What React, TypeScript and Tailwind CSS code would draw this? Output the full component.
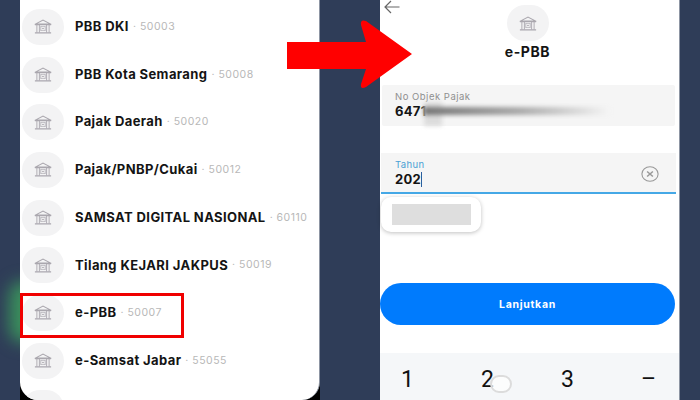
const banks = [
  { name: 'PBB DKI', code: '50003' },
  { name: 'PBB Kota Semarang', code: '50008' },
  { name: 'Pajak Daerah', code: '50020' },
  { name: 'Pajak/PNBP/Cukai', code: '50012' },
  { name: 'SAMSAT DIGITAL NASIONAL', code: '60110' },
  { name: 'Tilang KEJARI JAKPUS', code: '50019' },
  { name: 'e-PBB', code: '50007' },
  { name: 'e-Samsat Jabar', code: '55055' },
];

function BankIcon() {
  return (
    <span className="grid h-[36px] w-[42px] shrink-0 place-items-center rounded-full bg-[#f3f3f4]">
      <svg viewBox="0 0 20 20" preserveAspectRatio="none" className="h-[15px] w-[18px]" fill="none" stroke="#aaa7ae" strokeWidth="1.2">
        <path d="M2 6.5 L10 1.5 L18 6.5 Z" />
        <path d="M1 7.5 H19 M1 18.5 H19" strokeWidth="1.6" />
        <path d="M3.2 8 V18 M6 8 V18 M14 8 V18 M16.8 8 V18" strokeWidth="1.1" />
        <rect x="7.6" y="10" width="4.8" height="5.6" strokeWidth="0.8" />
        <circle cx="10" cy="12.8" r="1" fill="#aaa7ae" stroke="none" />
      </svg>
    </span>
  );
}

export default function App() {
  return (
    <div className="relative flex h-[400px] w-[700px] overflow-hidden bg-[#2f3d58] font-['Inter',sans-serif]">
      {/* green glow behind the left phone */}
      <div className="absolute left-[9px] top-[281px] h-[62px] w-[30px] rounded-full bg-[#3a8f5c] blur-[8px]" />

      {/* left phone */}
      <div className="relative ml-[20px] h-[400px] w-[300px] shrink-0 overflow-hidden bg-black">
        <div className="h-[400px] w-[300px] overflow-hidden rounded-b-[18px] border-r border-[#8d95a3] bg-white pt-[3px]">
          {banks.map((b) => (
            <div key={b.code} className="flex h-[47.7px] items-center pl-[2px]">
              <BankIcon />
              <span className="ml-[11px] text-[13px] font-bold tracking-[0.4px] whitespace-nowrap text-[#141414]">{b.name}</span>
              <span className="ml-[4px] text-[10.5px] tracking-[0.5px] whitespace-nowrap text-[#b8b8b8]">· {b.code}</span>
            </div>
          ))}
          <div className="flex h-[47.7px] items-center pl-[2px]">
            <BankIcon />
          </div>
        </div>
        {/* red highlight round e-PBB */}
        <div className="absolute left-0 top-[293px] h-[45px] w-[164px] border-[3px] border-[#f00000]" />
      </div>

      {/* right phone */}
      <div className="ml-[60px] flex h-[400px] w-[300px] shrink-0 flex-col border-r border-[#8d95a3] bg-white">
        <div className="relative flex flex-col items-center pt-[5px] pr-[4px]">
          <svg viewBox="0 0 16 14" className="absolute left-[4px] top-0 h-[14px] w-[16px]" fill="none" stroke="#666" strokeWidth="1.2">
            <path d="M15.5 7 H1 M7 1 L1 7 L7 13" />
          </svg>
          <BankIcon />
          <h1 className="mt-[1px] text-[14px] leading-[20px] font-bold tracking-[0.6px] text-[#141414]">e-PBB</h1>
        </div>

        <div className="relative mt-[23px] ml-[2px] h-[41px] w-[293px] rounded-[2px] bg-[#f5f5f5] px-[13px] pt-[6px]">
          <p className="text-[9.5px] leading-[12px] tracking-[0.5px] text-[#8f8f8f]">No Objek Pajak</p>
          <p className="text-[13px] leading-[17px] font-bold tracking-[0.3px] text-[#141414]">6471</p>
          <div className="absolute left-[42px] top-[17px] h-[24px] w-[18px] bg-[#dcdcdc] blur-[2px]" />
          <div className="absolute left-[42px] top-[22px] h-[8px] w-[186px] bg-gradient-to-r from-[#777777] via-[#a8a8a8] to-[#f5f5f5] blur-[2px]" />
        </div>

        <div className="relative mt-[27px] ml-[1px] h-[41px] w-[295px] border-b-2 border-[#45a8e6] bg-[#f5f5f5] px-[14px] pt-[6px]">
          <p className="text-[9.5px] leading-[12px] tracking-[0.4px] text-[#4a9fd4]">Tahun</p>
          <p className="flex items-center text-[13px] leading-[17px] font-bold tracking-[0.3px] text-[#141414]">
            202
            <span className="h-[15px] w-px bg-[#2a5f9e]" />
          </p>
          <svg viewBox="0 0 20 20" preserveAspectRatio="none" className="absolute right-[17px] top-[13px] h-[16px] w-[18px]" fill="none" stroke="#999999" strokeWidth="1.2">
            <circle cx="10" cy="10" r="9" />
            <path d="M6.8 6.8 L13.2 13.2 M13.2 6.8 L6.8 13.2" strokeWidth="1.6" />
          </svg>
        </div>

        <div className="mt-[3px] ml-[1px] grid h-[35px] w-[100px] place-items-center rounded-[10px] bg-white shadow-[0_1px_4px_rgba(0,0,0,0.25)]">
          <div className="h-[21px] w-[79px] bg-[#dedede] blur-[0.5px]" />
        </div>

        <button className="mt-[51px] h-[42px] w-[295px] rounded-full bg-[#007bfd] pt-[2px] text-[10.5px] font-bold tracking-[0.7px] text-white">
          Lanjutkan
        </button>

        <div className="relative mt-[28px] grid flex-1 grid-cols-4 bg-[#f5f7f9] pt-[13px] pr-[11px] text-[23px] leading-[28px] font-['Roboto',sans-serif] text-[#111111]">
          <span className="pl-[21px]">1</span>
          <span className="pl-[29px]">2</span>
          <span className="pl-[37px]">3</span>
          <span className="pl-[45px]">–</span>
          <div className="absolute left-[110px] top-[22px] h-[18px] w-[22px] rounded-full border-2 border-[#dcdcdc] bg-white/70" />
        </div>
      </div>

      {/* red arrow over both phones */}
      <svg viewBox="0 0 126 72" className="absolute left-[287px] top-[19px] h-[72px] w-[126px]">
        <path d="M0 23 H79 L74 6 Q73 0 79 2 L125 35 L79 68 Q73 71 74 65 L79 50 H0 Z" fill="#ff0000" />
      </svg>
    </div>
  );
}
